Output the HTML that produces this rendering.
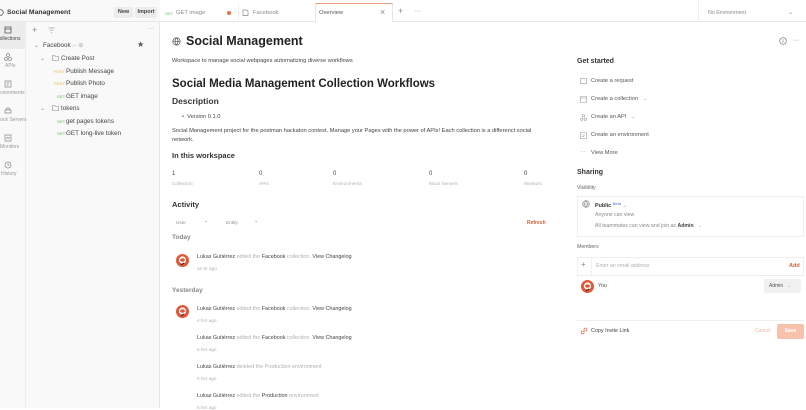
<!DOCTYPE html>
<html><head><meta charset="utf-8"><style>
*{margin:0;padding:0;box-sizing:border-box}
body{width:806px;height:408px;overflow:hidden;background:#fff;font-family:"Liberation Sans",sans-serif;color:#212121;position:relative;font-size:6px}
.a{position:absolute;white-space:nowrap}
.g{color:#8a8a8a}
.lg{color:#b0b0b0}
.b{font-weight:bold}
.get{color:#5fb35f;font-size:4px}
.post{color:#e6b43a;font-size:4px}
svg{position:absolute}
</style></head><body>
<div class="a" style="left:0;top:0;width:806px;height:22px;border-bottom:1px solid #e6e6e6;background:#fff"></div>
<div class="a" style="left:0;top:0;width:160px;height:22px;background:#f9f9f9;border-bottom:1px solid #e6e6e6"></div>
<svg style="left:-3px;top:9px" width="7" height="7"><circle cx="3.5" cy="3.5" r="2.8" fill="none" stroke="#555" stroke-width=".8"/></svg>
<div class="a b" style="left:7px;top:8.5px;font-size:6.8px;color:#333">Social Management</div>
<div class="a b" style="left:114px;top:7px;width:19px;height:11px;background:#ececec;border-radius:2px;font-size:5.5px;text-align:center;line-height:11px;color:#444">New</div>
<div class="a b" style="left:135px;top:7px;width:22px;height:11px;background:#ececec;border-radius:2px;font-size:5.5px;text-align:center;line-height:11px;color:#444">Import</div>
<div class="a" style="left:238px;top:4px;width:1px;height:16px;background:#eee"></div>
<div class="a" style="left:315px;top:3px;width:78px;height:19px;border-left:1px solid #e6e6e6;border-right:1px solid #e6e6e6;border-top:1.5px solid #e0a080;background:#fff"></div>
<div class="a get" style="left:165px;top:11px">GET</div>
<div class="a g" style="left:176px;top:10px;font-size:5.8px">GET image</div>
<div class="a" style="left:227px;top:11px;width:4px;height:4px;border-radius:50%;background:#e8763c"></div>
<svg style="left:242px;top:9px" width="7" height="7"><path d="M1 1h4l1 1v4.5H1z" fill="none" stroke="#888" stroke-width=".7"/></svg>
<div class="a g" style="left:253px;top:10px;font-size:5.8px">Facebook</div>
<div class="a" style="left:319px;top:10px;font-size:5.8px;color:#555">Overview</div>
<div class="a g" style="left:380px;top:7px;font-size:9px">×</div>
<div class="a g" style="left:398px;top:6px;font-size:9px">+</div>
<div class="a g" style="left:414px;top:8px;font-size:7px">···</div>
<div class="a" style="left:698px;top:0;width:1px;height:22px;background:#eee"></div>
<div class="a g" style="left:708px;top:10px;font-size:5.3px">No Environment</div>
<div class="a g" style="left:788px;top:9px;font-size:6px">⌄</div>

<div class="a" style="left:0;top:22px;width:26px;height:386px;background:#f9f9f9;border-right:1px solid #ececec"></div>
<div class="a" style="left:0;top:22px;width:26px;height:27px;background:#ececec"></div>
<div class="a" style="left:26px;top:22px;width:134px;height:386px;background:#f9f9f9;border-right:1px solid #e6e6e6"></div>
<svg style="left:4px;top:26px" width="8" height="8"><path d="M1 1h6v6H1zM1 3h6" fill="none" stroke="#555" stroke-width=".8"/></svg>
<div class="a" style="left:-4px;top:36px;font-size:5px;color:#444">Collections</div>
<svg style="left:4px;top:53px" width="8" height="8" fill="none" stroke="#888" stroke-width=".7"><circle cx="4" cy="2" r="1.5"/><circle cx="2" cy="6" r="1.5"/><circle cx="6" cy="6" r="1.5"/></svg>
<div class="a" style="left:5px;top:63px;font-size:5px;color:#999">APIs</div>
<svg style="left:4px;top:80px" width="8" height="8" fill="none" stroke="#888" stroke-width=".7"><path d="M1 1h6v6H1zM2.5 3h3M2.5 5h2"/></svg>
<div class="a" style="left:-6px;top:90px;font-size:5px;color:#999">Environments</div>
<svg style="left:4px;top:107px" width="8" height="8" fill="none" stroke="#888" stroke-width=".7"><path d="M1 3h6v3H1zM2 3l1-2h2l1 2"/></svg>
<div class="a" style="left:-4px;top:117px;font-size:5px;color:#999">Mock Servers</div>
<svg style="left:4px;top:134px" width="8" height="8" fill="none" stroke="#888" stroke-width=".7"><path d="M1 1h6v6H1zM2 5l1.5-1.5 1 1L6 3"/></svg>
<div class="a" style="left:0px;top:144px;font-size:5px;color:#999">Monitors</div>
<svg style="left:4px;top:161px" width="8" height="8" fill="none" stroke="#888" stroke-width=".7"><circle cx="4" cy="4" r="3"/><path d="M4 2.2V4h1.5"/></svg>
<div class="a" style="left:1px;top:171px;font-size:5px;color:#999">History</div>

<div class="a g" style="left:32px;top:25px;font-size:9px">+</div>
<svg style="left:48px;top:27px" width="7" height="7"><path d="M.5 1h6M1.8 3.2h3.4M3 5.4h1" stroke="#999" stroke-width=".7"/></svg>
<div class="a g" style="left:148px;top:26px;font-size:6px">···</div>
<div class="a g" style="left:34px;top:42px;font-size:6px">⌄</div>
<div class="a" style="left:43px;top:42px;font-size:6.3px;color:#444">Facebook <span class="lg" style="font-size:4px">ﾉﾉ</span> <span class="lg">⊕</span></div>
<div class="a" style="left:137px;top:40px;font-size:8px;color:#555">★</div>
<div class="a g" style="left:40px;top:55px;font-size:6px">⌄</div>
<svg style="left:52px;top:55px" width="7" height="6"><path d="M.5 .5h2.3l.7 1h3v4H.5z" fill="none" stroke="#888" stroke-width=".6"/></svg>
<div class="a" style="left:61px;top:55px;font-size:6.3px;color:#444">Create Post</div>
<div class="a post" style="left:54px;top:69px">POST</div><div class="a" style="left:66px;top:67.5px;font-size:6.3px;color:#444">Publish Message</div>
<div class="a post" style="left:54px;top:81px">POST</div><div class="a" style="left:66px;top:80px;font-size:6.3px;color:#444">Publish Photo</div>
<div class="a get" style="left:57px;top:94px">GET</div><div class="a" style="left:66px;top:92.5px;font-size:6.3px;color:#444">GET image</div>
<div class="a g" style="left:40px;top:105px;font-size:6px">⌄</div>
<svg style="left:52px;top:105px" width="7" height="6"><path d="M.5 .5h2.3l.7 1h3v4H.5z" fill="none" stroke="#888" stroke-width=".6"/></svg>
<div class="a" style="left:61px;top:105px;font-size:6.3px;color:#444">tokens</div>
<div class="a get" style="left:57px;top:119px">GET</div><div class="a" style="left:66px;top:117.5px;font-size:6.3px;color:#444">get pages tokens</div>
<div class="a get" style="left:57px;top:131px">GET</div><div class="a" style="left:66px;top:130px;font-size:6.3px;color:#444">GET long-live token</div>

<svg style="left:172px;top:37px" width="9" height="9" fill="none" stroke="#666" stroke-width=".8"><circle cx="4.5" cy="4.5" r="3.7"/><path d="M.8 4.5h7.4M4.5 .8c-2 2.4-2 5 0 7.4M4.5 .8c2 2.4 2 5 0 7.4"/></svg>
<div class="a b" style="left:186px;top:34px;font-size:12.5px;color:#222">Social Management</div>
<svg style="left:779px;top:37px" width="8" height="8" fill="none" stroke="#777" stroke-width=".7"><circle cx="4" cy="4" r="3.3"/><path d="M4 3.3v2.5M4 2v.6"/></svg>
<div class="a g" style="left:793px;top:37px;font-size:7px">···</div>
<div class="a" style="left:172px;top:58px;font-size:5.7px;color:#444">Workspace to manage social webpages automatizing diverse workflows</div>
<div class="a b" style="left:172px;top:78px;font-size:11.5px;color:#222">Social Media Management Collection Workflows</div>
<div class="a b" style="left:172px;top:96px;font-size:8.5px;color:#333">Description</div>
<div class="a" style="left:182px;top:114px;font-size:5.7px;color:#444">•&nbsp;&nbsp;Version 0.1.0</div>
<div class="a" style="left:172px;top:127px;font-size:5.7px;color:#444;line-height:9px;white-space:normal;width:370px">Social Management project for the postman hackaton contest. Manage your Pages with the power of APIs! Each collection is a differenct social network.</div>
<div class="a b" style="left:172px;top:151px;font-size:7.5px;color:#333">In this workspace</div>
<div class="a" style="left:172px;top:171px;font-size:6px;color:#444">1</div><div class="a lg" style="left:172px;top:181px;font-size:4.7px">Collection</div>
<div class="a" style="left:259px;top:171px;font-size:6px;color:#444">0</div><div class="a lg" style="left:259px;top:181px;font-size:4.7px">APIs</div>
<div class="a" style="left:333px;top:171px;font-size:6px;color:#444">0</div><div class="a lg" style="left:333px;top:181px;font-size:4.7px">Environments</div>
<div class="a" style="left:429px;top:171px;font-size:6px;color:#444">0</div><div class="a lg" style="left:429px;top:181px;font-size:4.7px">Mock Servers</div>
<div class="a" style="left:524px;top:171px;font-size:6px;color:#444">0</div><div class="a lg" style="left:524px;top:181px;font-size:4.7px">Monitors</div>
<div class="a b" style="left:172px;top:200px;font-size:7.5px;color:#333">Activity</div>
<div class="a g" style="left:176px;top:220px;font-size:4.7px">User</div><div class="a g" style="left:204px;top:218px;font-size:5px">⌄</div>
<div class="a g" style="left:226px;top:220px;font-size:4.7px">Entity</div><div class="a g" style="left:254px;top:218px;font-size:5px">⌄</div>
<div class="a b" style="left:527px;top:220px;font-size:5px;color:#d0603a">Refresh</div>
<div class="a b" style="left:172px;top:234px;font-size:6.5px;color:#888">Today</div>
<div class="a b" style="left:172px;top:287px;font-size:6.5px;color:#888">Yesterday</div>

<svg style="left:175px;top:253px" width="15" height="15"><circle cx="7.5" cy="7.5" r="6.5" fill="#e0593a"/><circle cx="7.5" cy="7" r="3.6" fill="#fff"/><ellipse cx="7.5" cy="7" rx="2.4" ry="1.8" fill="#e0593a"/><path d="M6 12l3-2" stroke="#333" stroke-width="1.2"/></svg>
<svg style="left:175px;top:304px" width="15" height="15"><circle cx="7.5" cy="7.5" r="6.5" fill="#e0593a"/><circle cx="7.5" cy="7" r="3.6" fill="#fff"/><ellipse cx="7.5" cy="7" rx="2.4" ry="1.8" fill="#e0593a"/><path d="M6 12l3-2" stroke="#333" stroke-width="1.2"/></svg>

<div class="a" style="left:197px;top:254px;font-size:5.4px;color:#444">Lukas Gutiérrez <span class="lg">edited the</span> Facebook <span class="lg">collection.</span> View Changelog</div>
<div class="a lg" style="left:197px;top:266px;font-size:4.7px">an hr ago</div>
<div class="a" style="left:197px;top:306px;font-size:5.4px;color:#444">Lukas Gutiérrez <span class="lg">edited the</span> Facebook <span class="lg">collection.</span> View Changelog</div>
<div class="a lg" style="left:197px;top:318px;font-size:4.7px">4 hrs ago</div>
<div class="a" style="left:197px;top:335px;font-size:5.4px;color:#444">Lukas Gutiérrez <span class="lg">edited the</span> Facebook <span class="lg">collection.</span> View Changelog</div>
<div class="a lg" style="left:197px;top:347px;font-size:4.7px">5 hrs ago</div>
<div class="a" style="left:197px;top:364px;font-size:5.4px;color:#444">Lukas Gutiérrez <span class="lg">deleted the Production environment</span></div>
<div class="a lg" style="left:197px;top:376px;font-size:4.7px">5 hrs ago</div>
<div class="a" style="left:197px;top:393px;font-size:5.4px;color:#444">Lukas Gutiérrez <span class="lg">edited the</span> Production <span class="lg">environment</span></div>
<div class="a lg" style="left:197px;top:405px;font-size:4.7px">6 hrs ago</div>

<div class="a b" style="left:577px;top:58px;font-size:7px;color:#333">Get started</div>
<svg style="left:580px;top:78px" width="7" height="6" fill="none" stroke="#999" stroke-width=".6"><rect x=".5" y=".5" width="6" height="5"/></svg>
<div class="a" style="left:591px;top:78px;font-size:5.7px;color:#555">Create a request</div>
<svg style="left:580px;top:96px" width="7" height="7" fill="none" stroke="#999" stroke-width=".6"><path d="M.5 .5h6v6h-6zM.5 2h6"/></svg>
<div class="a" style="left:591px;top:96px;font-size:5.7px;color:#555">Create a collection&nbsp;&nbsp;&nbsp;<span class="lg">⌄</span></div>
<svg style="left:580px;top:114px" width="7" height="7" fill="none" stroke="#999" stroke-width=".6"><circle cx="3.5" cy="1.7" r="1.2"/><circle cx="1.7" cy="5.3" r="1.2"/><circle cx="5.3" cy="5.3" r="1.2"/></svg>
<div class="a" style="left:591px;top:114px;font-size:5.7px;color:#555">Create an API&nbsp;&nbsp;&nbsp;<span class="lg">⌄</span></div>
<svg style="left:580px;top:132px" width="7" height="7" fill="none" stroke="#999" stroke-width=".6"><path d="M.5 .5h6v6h-6zM2 3h3M2 4.7h2"/></svg>
<div class="a" style="left:591px;top:132px;font-size:5.7px;color:#555">Create an environment</div>
<div class="a g" style="left:580px;top:149px;font-size:5px">···</div>
<div class="a" style="left:591px;top:150px;font-size:5.7px;color:#555">View More</div>

<div class="a b" style="left:577px;top:169px;font-size:7px;color:#333">Sharing</div>
<div class="a" style="left:577px;top:185px;font-size:5.2px;color:#666">Visibility</div>
<div class="a" style="left:577px;top:196px;width:227px;height:41px;border:1px solid #eee"></div>
<svg style="left:582px;top:200px" width="8" height="8" fill="none" stroke="#777" stroke-width=".6"><circle cx="4" cy="4" r="3.3"/><path d="M.7 4h6.6M4 .7c-1.8 2-1.8 4.6 0 6.6M4 .7c1.8 2 1.8 4.6 0 6.6"/></svg>
<div class="a b" style="left:595px;top:201px;font-size:5.4px;color:#333">Public <span style="color:#3a6fd8;font-weight:normal;font-size:4px;vertical-align:2px">Beta</span> <span class="lg" style="font-weight:normal">⌄</span></div>
<div class="a g" style="left:595px;top:212px;font-size:5.2px">Anyone can view</div>
<div class="a g" style="left:595px;top:223px;font-size:5.2px">All teammates can view and join as <b style="color:#444">Admin</b>&nbsp;&nbsp;&nbsp;<span class="lg">⌄</span></div>
<div class="a" style="left:577px;top:244px;font-size:5.2px;color:#666">Members</div>
<div class="a" style="left:577px;top:257px;width:227px;height:19px;border:1px solid #eee"></div>
<div class="a" style="left:591px;top:257px;width:1px;height:19px;background:#eee"></div>
<div class="a g" style="left:581px;top:260px;font-size:8px">+</div>
<div class="a lg" style="left:596px;top:263px;font-size:5.2px">Enter an email address</div>
<div class="a b" style="left:789px;top:263px;font-size:5.5px;color:#d0603a">Add</div>
<svg style="left:580px;top:279px" width="15" height="15"><circle cx="7.5" cy="7.5" r="6.5" fill="#e0593a"/><circle cx="7.5" cy="7" r="3.6" fill="#fff"/><ellipse cx="7.5" cy="7" rx="2.4" ry="1.8" fill="#e0593a"/><path d="M6 12l3-2" stroke="#333" stroke-width="1.2"/></svg>
<div class="a" style="left:598px;top:283px;font-size:5.2px;color:#444">You</div>
<div class="a" style="left:764px;top:279px;width:37px;height:14px;background:#f1f1f1;border-radius:2px"></div>
<div class="a" style="left:769px;top:283px;font-size:5px;color:#555">Admin&nbsp;&nbsp;&nbsp;<span class="lg">⌄</span></div>
<div class="a" style="left:577px;top:320px;width:227px;height:1px;background:#f0f0f0"></div>
<svg style="left:580px;top:327px" width="8" height="8" fill="none" stroke="#d0603a" stroke-width=".7"><path d="M3 5l2-2M2.5 3.5L1.5 4.5a1.3 1.3 0 002 2l1-1M5.5 4.5l1-1a1.3 1.3 0 00-2-2l-1 1"/></svg>
<div class="a" style="left:591px;top:328px;font-size:5.4px;color:#444">Copy Invite Link</div>
<div class="a" style="left:755px;top:328px;font-size:5px;color:#f0b8a0">Cancel</div>
<div class="a" style="left:777px;top:324px;width:27px;height:15px;background:#f6c2ac;border-radius:2px;color:#fff;font-size:5px;text-align:center;line-height:15px;font-weight:bold">Save</div>
</body></html>
